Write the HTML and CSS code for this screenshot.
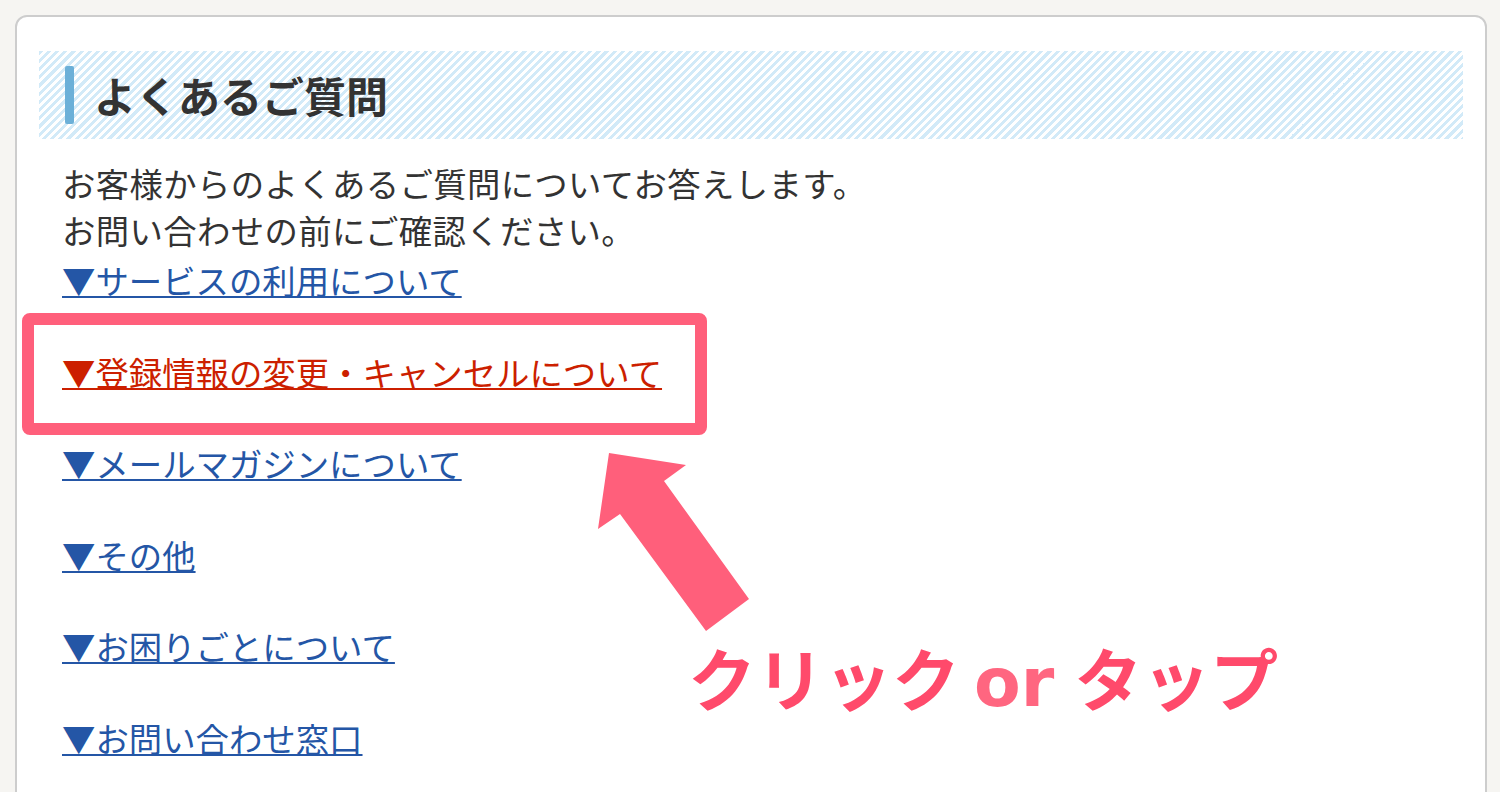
FILE: index.html
```
<!DOCTYPE html>
<html lang="ja">
<head>
    <meta charset="UTF-8">
    <title>よくあるご質問</title>
    <link rel="stylesheet" href="styles.css">
</head>
<body>
<section class="faq">
    <h2 class="faq-title">よくあるご質問</h2>
    <div class="faq-body">
        <p class="lead">お客様からのよくあるご質問についてお答えします。<br>お問い合わせの前にご確認ください。</p>
        <ul class="faq-links">
            <li><a href="#">▼サービスの利用について</a></li>
            <li class="is-pick"><a href="#">▼登録情報の変更・キャンセルについて</a><span class="pick-box"></span></li>
            <li><a href="#">▼メールマガジンについて</a></li>
            <li><a href="#">▼その他</a></li>
            <li><a href="#">▼お困りごとについて</a></li>
            <li><a href="#">▼お問い合わせ窓口</a></li>
        </ul>
    </div>
    <!-- 注釈：矢印と「クリック or タップ」 -->
    <svg class="hint-arrow" width="152" height="179" viewBox="0 0 152 179">
        <polygon points="11,0 88,12 66,28 151,146 108,178 22,61 0,76" fill="#ff5f7b"/>
    </svg>
    <p class="hint">クリック<span>or</span>タップ</p>
</section>
</body>
</html>
```
FILE: styles.css
```
* {
    margin: 0;
    padding: 0;
}

ul, li {
    list-style: none;
}

html, body {
    width: 100%;
    height: 100%;
    overflow: hidden;
}

body {
    background: #f6f5f2;
    font-family: "Noto Sans CJK JP", "Noto Sans", sans-serif;
    color: #333;
}

.faq {
    position: relative;
    margin: 15px 13px 0 15px;
    padding: 34px 22px 120px;
    background: #fff;
    border: 2px solid #cdcdcd;
    border-radius: 12px;
}

.faq-title {
    display: flex;
    align-items: center;
    height: 88px;
    padding-left: 26px;
    font-size: 42px;
    font-weight: bold;
    line-height: 1;
    color: #333;
    background: repeating-linear-gradient(135deg, #d2eaf8 0, #d2eaf8 3px, #fff 3px, #fff 5.8px);
}

.faq-title::before {
    content: "";
    width: 9px;
    height: 58px;
    margin-right: 20px;
    background: #6cb0d8;
    border-radius: 2px;
}

.faq-body {
    padding: 20px 0 0 23px;
    font-size: 33.4px;
    line-height: 47px;
}

.lead {
    letter-spacing: 0.35px;
}

.faq-links {
    margin-top: 3px;
}

.faq-links li + li {
    margin-top: 44.5px;
}

.faq-links a {
    color: #2456a6;
    text-decoration: underline;
    text-decoration-thickness: 2px;
    text-underline-offset: 2px;
}

.faq-links .is-pick {
    position: relative;
}

.faq-links .is-pick a {
    color: #cc1f00;
}

.pick-box {
    position: absolute;
    left: -40px;
    top: -35px;
    width: 661px;
    height: 98px;
    border: 12px solid #ff5f7b;
    border-radius: 8px;
}

.hint-arrow {
    position: absolute;
    left: 581px;
    top: 436px;
}

.hint {
    position: absolute;
    left: 671px;
    top: 626px;
    font-size: 68px;
    font-weight: bold;
    line-height: 68px;
    color: #ff4a6b;
    white-space: nowrap;
}

.hint span {
    margin: 0 20px 0 14px;
    font-family: "DejaVu Sans", sans-serif;
    color: #ff6680;
}
```
